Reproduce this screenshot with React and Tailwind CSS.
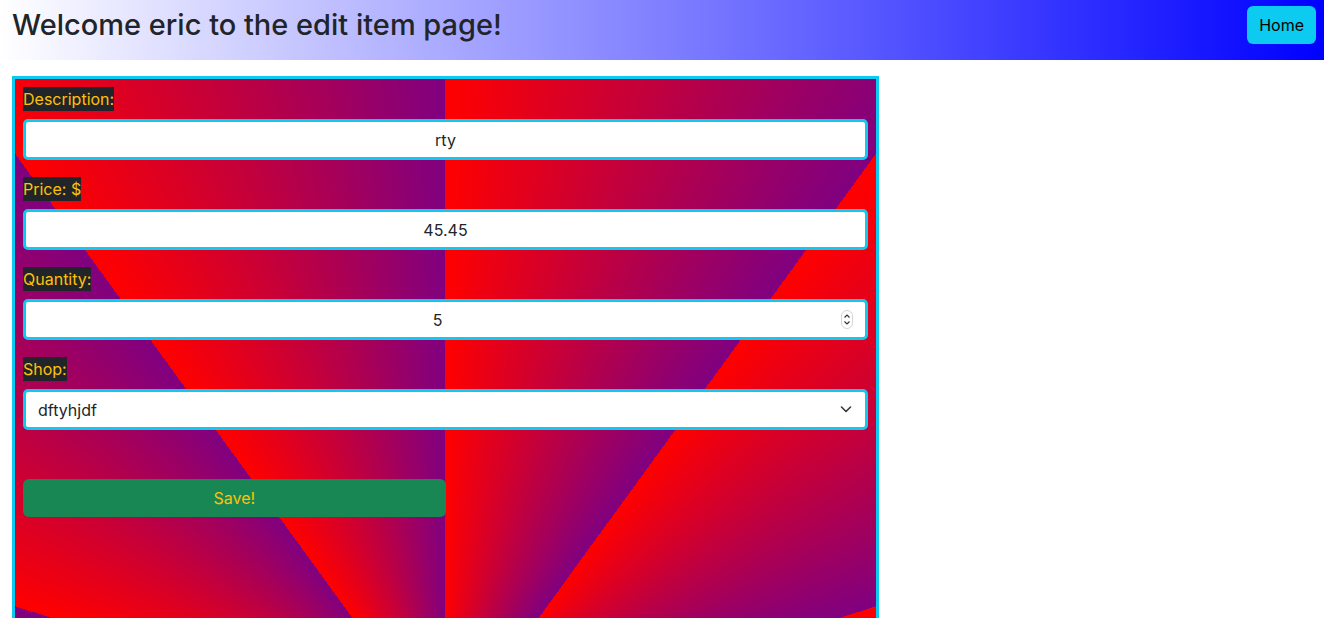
import { useState } from 'react';

const font = { fontFamily: 'Inter, "Liberation Sans", Arial, sans-serif' };

function Label({ children }) {
  return (
    <div className="mb-2">
      <span className="inline-block bg-[#212529] text-[#ffc107] text-base leading-6">{children}</span>
    </div>
  );
}

export default function App() {
  const [desc, setDesc] = useState('rty');
  const [price, setPrice] = useState('45.45');
  const [qty, setQty] = useState('5');
  const [shop, setShop] = useState('dftyhjdf');

  const inputCls = 'block w-full h-[41px] px-3 bg-white border-[3px] border-[#0dcaf0] rounded-[5px] text-base text-[#212529] text-center outline-none';

  return (
    <div className="h-[618px] overflow-hidden bg-white" style={font}>
      <header className="w-[1324px] h-[60px] flex items-start justify-between pl-3 pr-2 bg-[linear-gradient(to_right,white,blue)]">
        <h3 className="text-[29px] leading-[1.2] font-medium text-[#212529] mt-[8px]">Welcome eric to the edit item page!</h3>
        <button className="mt-[6px] h-[38px] px-3 rounded-md bg-[#0dcaf0] text-black text-base">Home</button>
      </header>

      <form
        className="ml-3 mt-4 w-[867px] h-[1340px] border-[3px] border-[#0dcaf0] p-2 bg-[image:repeating-conic-gradient(from_0deg_at_50%_667px,red_0deg,purple_36deg)]"
        onSubmit={e => e.preventDefault()}
      >
        <Label>Description:</Label>
        <input className={inputCls + ' mb-[17px]'} value={desc} onChange={e => setDesc(e.target.value)} />

        <Label>Price: $</Label>
        <input className={inputCls + ' mb-[17px]'} value={price} onChange={e => setPrice(e.target.value)} />

        <Label>Quantity:</Label>
        <div className="relative mb-[17px]">
          <input className={inputCls + ' pr-[28px]'} value={qty} onChange={e => setQty(e.target.value)} />
          <svg className="absolute right-[15px] top-[11px]" width="12" height="19" viewBox="0 0 12 19" fill="none">
            <rect x="0.5" y="0.5" width="11" height="18" rx="5.5" stroke="#d4d4d4" />
            <path d="M3.5 7.5 L6 5 L8.5 7.5" stroke="#333" strokeWidth="1.2" />
            <path d="M3.5 11.5 L6 14 L8.5 11.5" stroke="#333" strokeWidth="1.2" />
          </svg>
        </div>

        <Label>Shop:</Label>
        <div className="relative">
          <select
            className="block w-full h-[41px] pl-3 pr-10 bg-white border-[3px] border-[#0dcaf0] rounded-[5px] text-base text-[#212529] appearance-none outline-none"
            value={shop}
            onChange={e => setShop(e.target.value)}
          >
            <option>dftyhjdf</option>
          </select>
          <svg className="absolute right-[16px] top-[16px] pointer-events-none" width="12" height="9" viewBox="0 0 12 9" fill="none">
            <path d="M1.5 2 L6 6.5 L10.5 2" stroke="#343a40" strokeWidth="1.6" strokeLinecap="round" strokeLinejoin="round" />
          </svg>
        </div>

        <div className="h-[49px]"></div>
        <button type="submit" className="block w-1/2 h-[38px] rounded-md bg-[#198754] text-[#ffc107] text-base">Save!</button>
      </form>
    </div>
  );
}
